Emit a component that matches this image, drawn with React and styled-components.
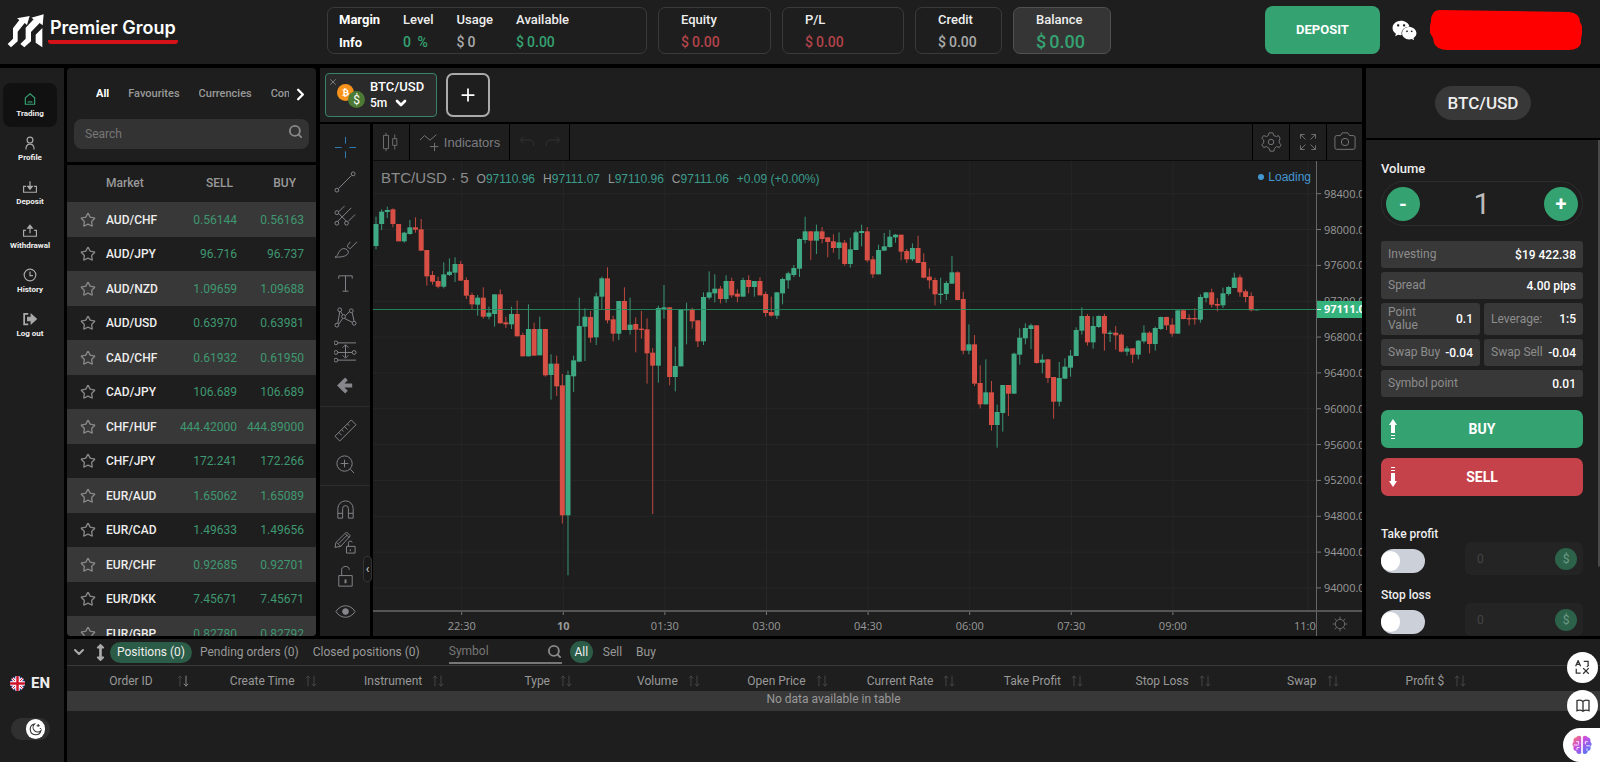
import React, { useState } from 'react'
import styled, { createGlobalStyle } from 'styled-components'
import { ChevronDown, ChevronRight, MoveDown, MoveUp, Search, Star, X } from 'lucide-react'
import { FaArrowsAltV, FaBtc, FaWeixin } from 'react-icons/fa'

const pairs = [
    ['AUD/CHF', '0.56144', '0.56163'],
    ['AUD/JPY', '96.716', '96.737'],
    ['AUD/NZD', '1.09659', '1.09688'],
    ['AUD/USD', '0.63970', '0.63981'],
    ['CAD/CHF', '0.61932', '0.61950'],
    ['CAD/JPY', '106.689', '106.689'],
    ['CHF/HUF', '444.42000', '444.89000'],
    ['CHF/JPY', '172.241', '172.266'],
    ['EUR/AUD', '1.65062', '1.65089'],
    ['EUR/CAD', '1.49633', '1.49656'],
    ['EUR/CHF', '0.92685', '0.92701'],
    ['EUR/DKK', '7.45671', '7.45671'],
    ['EUR/GBP', '0.82780', '0.82792'],
]

const columns = ['Order ID', 'Create Time', 'Instrument', 'Type', 'Volume', 'Open Price', 'Current Rate', 'Take Profit', 'Stop Loss', 'Swap', 'Profit $']

const prices = [98400, 98000, 97600, 97200, 96800, 96400, 96000, 95600, 95200, 94800, 94400, 94000]
const times = ['22:30', '10', '01:30', '03:00', '04:30', '06:00', '07:30', '09:00']

// direction, then high, body top, body bottom, low (three units to a pixel)
const candles = `g50,72,138,148 g28,35,72,90 g20,30,36,54 r25,28,72,82 r72,72,124,124 g95,98,124,128 g60,82,102,104
r52,82,89,98 r57,88,152,152 r150,150,229,257 r213,225,245,254 r230,243,260,265 g187,223,260,265 g175,215,225,228
g172,192,218,246 r183,192,242,242 r232,240,287,297 r278,285,313,328 g285,293,314,347 r262,293,350,356 g320,338,350,358
g283,283,342,380 r268,283,370,370 r350,367,373,384 g320,342,373,387 r302,342,409,409 r398,405,469,469 g313,387,469,469
r368,387,467,467 g350,387,466,466 r387,387,526,530 g463,491,525,599 r467,491,559,588 r522,556,946,971 g512,525,946,1126
g467,481,529,576 g293,378,485,485 g325,350,380,483 r333,351,413,428 g278,289,412,435 g230,235,290,328 r202,235,361,370
r347,358,401,424 g303,303,401,420 r262,303,390,390 g293,374,390,404 r352,372,389,457 r333,386,390,416 r355,388,460,551
r444,458,497,942 g317,324,497,548 g255,322,327,356 r322,322,531,556 g440,498,531,574 g327,327,499,499 g308,327,331,433
r323,328,364,386 r361,361,424,441 g277,291,424,435 g214,277,293,298 g223,266,280,307 r258,266,297,310 g226,243,297,308
r233,243,286,293 r268,281,290,307 g233,240,290,290 r226,240,261,280 g243,243,261,290 r232,243,286,286 r275,282,339,350
r290,336,347,350 g277,277,347,357 g233,237,280,313 g215,220,241,266 g195,204,225,231 g115,117,206,231 g50,94,120,130
r94,94,122,180 g74,94,122,162 r81,94,117,130 r112,112,126,172 r103,124,144,158 g97,127,144,178 r120,128,192,197
g113,148,192,203 g92,97,150,150 g74,93,99,139 r81,94,181,187 r168,178,223,234 g134,150,223,223 g99,139,152,152
g90,110,141,143 g102,104,112,128 r104,104,155,181 r147,153,178,189 g130,144,178,183 r107,144,189,189 r160,186,233,235
r205,230,241,266 r233,240,283,316 g233,281,285,311 g243,249,282,300 g168,217,251,251 r214,217,300,301 r275,297,452,463
g373,433,452,463 r405,433,551,558 r496,549,613,625 g478,577,613,613 r543,577,675,692 g614,636,675,743 g555,555,639,695
r555,555,581,648 g458,461,581,581 g385,413,464,494 g370,384,415,433 g371,376,387,447 r376,376,489,491 g463,479,488,520
r478,478,534,549 r531,531,605,656 g486,534,605,619 g475,500,536,536 g450,467,503,530 g382,390,468,468 g322,348,392,404
r342,348,427,437 g349,378,427,446 g346,348,381,384 r341,348,401,452 g391,398,402,426 r378,398,406,449 r400,404,455,457
g438,445,455,467 r445,445,464,489 g420,422,464,478 g376,398,424,430 r394,398,432,460 g380,384,432,452 g350,351,387,390
r350,351,376,390 r355,374,401,410 g330,331,401,401 r328,331,357,358 r343,354,358,376 r325,354,358,374 g283,291,359,368
g277,277,294,307 r266,277,314,322 r294,312,317,334 g263,280,316,324 g258,261,282,287 g218,233,264,264 r224,232,277,290
r268,274,291,307 r277,288,331,334 g327,328,331,331`
    .split(/\s+/)
    .map((c) => [c[0] === 'g', ...c.slice(1).split(',').map(Number)])

const priceY = (i) => 32.7 + i * 35.84
const timeX = (i) => 88.7 + i * 101.6

const Line = ({ size = 24, children, ...rest }) => (
    <svg width={size} height={size} viewBox="0 0 24 24" fill="none" stroke="currentColor" strokeWidth="1" aria-hidden="true" {...rest}>
        {children}
    </svg>
)

const navItems = [
    ['Trading', <><path d="M4 10l8-7 8 7v11H4z" /><path d="M8 17h8" /></>],
    ['Profile', <><circle cx="12" cy="7" r="5" /><path d="M5 23c0-6 3-9 7-9s7 3 7 9" /></>],
    ['Deposit', <><path d="M5 11H1v10h22V11h-4M12 2v12" /><path d="M8 11l4 5 4-5z" fill="currentColor" /></>],
    ['Withdrawal', <><path d="M5 11H1v10h22V11h-4M12 16V6" /><path d="M8 7l4-5 4 5z" fill="currentColor" /></>],
    ['History', <><circle cx="12" cy="12" r="10" /><path d="M12 6v7h5" /></>],
    ['Log out', <><path d="M9 3H2v18h7" strokeWidth="3" /><path d="M8 9h6V4l9 8-9 8v-5H8z" fill="currentColor" /></>],
]

const drawTools = [
    [
        ['Cross', <path d="M12 1v7M12 16v7M1 12h7M16 12h7" />],
        ['Trend line', <><circle cx="3" cy="21" r="2" /><circle cx="20" cy="4" r="2" /><path d="M5 19L18 6" /></>],
        ['Pitchfork', <><circle cx="3" cy="9" r="2" /><circle cx="3" cy="20" r="2" /><circle cx="13" cy="20" r="2" /><path d="M5 8l6-6M4 18L18 4M5 10l8 8M15 18l7-7" /></>],
        ['Brush', <><path d="M1 20c4-1 3-8 9-9 3 0 5 2 5 4-1 4-6 5-14 5z" /><path d="M14 8c0 2 2 3 3 3l7-7M14 8l3-4" /></>],
        ['Text', <path d="M5 7V4h14v3M12 4v16M9 20h6" />],
        ['Pattern', <><circle cx="3" cy="20" r="2" /><circle cx="6" cy="4" r="2" /><circle cx="10" cy="11" r="2" /><circle cx="18" cy="5" r="2" /><circle cx="21" cy="18" r="2" /><path d="M4 18L6 6M7 6l2 3M12 10l4-4M19 7l2 9M11 13l8 4M9 13l-4 6" /></>],
        ['Forecast', <><circle cx="2" cy="3" r="2" /><circle cx="2" cy="13" r="2" /><circle cx="21" cy="13" r="2" /><circle cx="2" cy="21" r="2" /><path d="M4 3h19M4 13h15M4 21h19M12 5v13M9 8l3-3 3 3M9 16l3 3 3-3" /></>],
        ['Arrow', <path d="M13 5l-7 7 7 7M6 12h13" strokeWidth="4" />],
    ],
    [
        ['Measure', <><path d="M1 18L18 1l5 5L6 23z" /><path d="M5 14l3 3M8 11l2 2M11 8l3 3M14 5l2 2" /></>],
        ['Zoom in', <><circle cx="11" cy="11" r="8" /><path d="M17 17l4 4M7 11h8M11 7v8" /></>],
    ],
    [
        ['Magnet', <path d="M4 21V11a8 8 0 0116 0v10h-5V11a3 3 0 00-6 0v10zM4 16h5M15 16h5" />],
        ['Lock drawing', <><path d="M1 16l1-5L13 0l4 4L7 15zM3 11l4 4M12 2l4 4M5 12l9-9" /><path d="M13 15h9v7h-9zM15 15v-3a2 2 0 014-1M17 18v2" /></>],
        ['Lock all', <><path d="M5 10h14v11H5zM8 10V5a4 4 0 018-1" /><path d="M12 14v4" strokeWidth="2" /></>],
        ['Hide', <><path d="M2 12c5-8 15-8 20 0-5 8-15 8-20 0z" /><circle cx="12" cy="12" r="3" fill="currentColor" /></>],
    ],
]

const Logo = () => (
    <svg width="37" height="35" viewBox="22 32 111 105" fill="#fff" aria-hidden="true">
        <path d="M24 125L40 109V78L59 53 52 48 90 41 82 68 75 62 54 88V117L34 135zM62 125L78 109V76L102 51 95 46 132 36 129 69 120 62 94 89V117L74 135zM128 77V135L108 121V97z" />
    </svg>
)

const Moon = () => (
    <svg width="13" height="13" viewBox="0 0 24 24" fill="none" stroke="#333" strokeWidth="2">
        <path d="M10 2a10 10 0 1012 12A8 8 0 0110 2z" />
        <path d="M17 2v5M14 5h6M21 9v2" />
    </svg>
)

const Flag = () => (
    <svg width="15" height="15" viewBox="0 0 30 30" aria-hidden="true">
        <defs><clipPath id="flag"><circle cx="15" cy="15" r="15" /></clipPath></defs>
        <g clipPath="url(#flag)">
            <path d="M0 0h30v30H0z" fill="#27348b" />
            <path d="M0 0l30 30M30 0L0 30" stroke="#fff" strokeWidth="6" />
            <path d="M0 0l30 30M30 0L0 30" stroke="#d0142c" strokeWidth="2" />
            <path d="M15 0v30M0 15h30" stroke="#fff" strokeWidth="9" />
            <path d="M15 0v30M0 15h30" stroke="#d0142c" strokeWidth="5" />
        </g>
    </svg>
)

const Chart = () => (
    <ChartGrid>
        <svg width="100%" height="100%">
            {prices.map((p, i) => <line key={p} x1="0" x2="100%" y1={priceY(i)} y2={priceY(i)} stroke="#272727" />)}
            {times.map((t, i) => <line key={t} y1="0" y2="100%" x1={timeX(i)} x2={timeX(i)} stroke="#26262b" />)}
            <line y1="0" y2="100%" x1="935" x2="935" stroke="#26262b" />
            <g transform="translate(0 39) scale(0.33333)">
                {candles.map(([up, high, top, bottom, low], i) => {
                    const x = 9 + i * 16.94
                    return (
                        <g key={i} fill={up ? '#3fa984' : '#d85045'}>
                            <rect x={x - 1.5} y={high} width="3" height={low - high} opacity="0.85" />
                            <rect x={x - 7.5} y={top} width="15" height={Math.max(bottom - top, 3)} />
                        </g>
                    )
                })}
            </g>
            <line x1="0" x2="100%" y1="148.5" y2="148.5" stroke="#259060" strokeOpacity="0.85" />
        </svg>
        <PriceAxis width="100%" height="100%">
            {prices.map((p, i) => (
                <g key={p}>
                    <line x1="0" x2="4" y1={priceY(i)} y2={priceY(i)} stroke="#777" />
                    <text x="7" y={priceY(i) + 4}>{p}.00</text>
                </g>
            ))}
            <rect y="140" width="100%" height="17" fill="#36b27d" />
            <line x1="0" x2="4" y1="148.5" y2="148.5" stroke="#fff" />
            <LastPrice x="7" y="152">97111.06</LastPrice>
        </PriceAxis>
        <TimeAxis width="100%" height="100%">
            {times.map((t, i) => (
                <g key={t}>
                    <line y1="0" y2="3" x1={timeX(i)} x2={timeX(i)} stroke="#777" />
                    <text x={timeX(i)} y="18" fontWeight={t === '10' ? 700 : 400}>{t}</text>
                </g>
            ))}
            <text x="935" y="18">11:00</text>
        </TimeAxis>
        <AxisCorner aria-label="Axis settings">
            <Line size={16}><circle cx="12" cy="12" r="7" /><path d="M12 1v4M12 19v4M1 12h4M19 12h4M4 4l3 3M17 17l3 3M4 20l3-3M17 7l3-3" /></Line>
        </AxisCorner>
        <Legend>
            <LegendSymbol>BTC/USD <i>·</i> 5</LegendSymbol>
            <span>O<b>97110.96</b></span>
            <span>H<b>97111.07</b></span>
            <span>L<b>97110.96</b></span>
            <span>C<b>97111.06</b></span>
            <b>+0.09 (+0.00%)</b>
        </Legend>
        <Loading>Loading</Loading>
    </ChartGrid>
)

const Limit = ({ id, label }) => (
    <LimitRow>
        <LimitLabel htmlFor={id}>{label}</LimitLabel>
        <Switch id={id} type="checkbox" />
        <LimitBox>
            <LimitInput aria-label={`${label} value`} defaultValue="0" disabled />
            <Currency>$</Currency>
        </LimitBox>
    </LimitRow>
)

const TradeArrow = ({ down }) => (
    <svg width="8" height="20" viewBox="0 0 8 20" fill="#fff" aria-hidden="true">
        <path d={down ? 'M2 0h4v1H2zM2 3h4v1H2zM2 6h4v8h2l-4 6-4-6h2z' : 'M2 20h4v-1H2zM2 17h4v-1H2zM2 14h4V6h2L4 0 0 6h2z'} />
    </svg>
)

const App = () => {
    const [volume, setVolume] = useState(1)

    return (
        <Page>
            <GlobalStyle />
            <Header>
                <Brand>
                    <Logo />
                    <BrandName>Premier Group</BrandName>
                </Brand>
                <Stats>
                    <MarginBox>
                        <MarginTitle>Margin<br />Info</MarginTitle>
                        <Stat $color="#35a272"><span>Level</span><Value><i>0</i> %</Value></Stat>
                        <Stat $color="#aaa"><span>Usage</span><Value>$<i>0</i></Value></Stat>
                        <Stat $color="#35a272"><span>Available</span><Value>$<i>0.00</i></Value></Stat>
                    </MarginBox>
                    <StatBox $width="113px"><Stat $color="#b3434a"><span>Equity</span><Value>$<i>0.00</i></Value></Stat></StatBox>
                    <StatBox $width="122px"><Stat $color="#b3434a"><span>P/L</span><Value>$<i>0.00</i></Value></Stat></StatBox>
                    <StatBox $width="87px"><Stat $color="#aaa"><span>Credit</span><Value>$<i>0.00</i></Value></Stat></StatBox>
                    <StatBox $width="98px" $filled><Stat $color="#35a272"><span>Balance</span><Value $large>$<i>0.00</i></Value></Stat></StatBox>
                </Stats>
                <DepositButton>DEPOSIT</DepositButton>
                <IconButton aria-label="WeChat"><FaWeixin size={25} color="#fff" /></IconButton>
                <svg width="154" height="42" viewBox="0 0 154 42" aria-hidden="true">
                    <path d="M10 1L140 3Q151 4 151 13L153 17V25L152 30V34Q150 41 140 41H18Q8 41 5 34L4 29L1 24V17L2 12Q2 2 10 1z" fill="#f00" />
                </svg>
            </Header>

            <Sidebar>
                <Nav>
                    {navItems.map(([name, icon], i) => (
                        <NavItem key={name} href="#" $active={i === 0}>
                            <Line size={14} strokeWidth="2">{icon}</Line>
                            {name}
                        </NavItem>
                    ))}
                </Nav>
                <Language><Flag /> EN</Language>
                <ThemeToggle aria-label="Dark mode"><span><Moon /></span></ThemeToggle>
            </Sidebar>

            <Workspace>
                <Market>
                    <MarketTop>
                        <MarketTabs>
                            <MarketTab $active>All</MarketTab>
                            <MarketTab>Favourites</MarketTab>
                            <MarketTab>Currencies</MarketTab>
                            <MarketTab $cut>Commodities</MarketTab>
                            <IconButton aria-label="Next"><ChevronRight size={19} strokeWidth={3} color="#fff" /></IconButton>
                        </MarketTabs>
                        <SearchBox>
                            <SearchInput aria-label="Search" placeholder="Search" />
                            <Search size={15} color="#888" strokeWidth={3} />
                        </SearchBox>
                    </MarketTop>
                    <MarketList>
                        <PairTable>
                            <colgroup>
                                <StarCol /><col /><SellCol /><BuyCol />
                            </colgroup>
                            <thead>
                                <tr><th colSpan="2">Market</th><th>SELL</th><th>BUY</th></tr>
                            </thead>
                            <tbody>
                                {pairs.map(([name, sell, buy]) => (
                                    <tr key={name}>
                                        <td><IconButton aria-label={`Favourite ${name}`}><Star size={16} color="#888" /></IconButton></td>
                                        <td>{name}</td>
                                        <td>{sell}</td>
                                        <td>{buy}</td>
                                    </tr>
                                ))}
                            </tbody>
                        </PairTable>
                    </MarketList>
                </Market>

                <Center>
                    <ChartTabs>
                        <ChartTab>
                            <CloseTab aria-label="Close"><X size={10} /></CloseTab>
                            <Coins>
                                <Coin $color="#f7931a"><FaBtc size={9} /></Coin>
                                <Coin $color="#4c7a34">$</Coin>
                            </Coins>
                            <TabText>
                                BTC/USD
                                <Interval>5m <ChevronDown size={16} strokeWidth={4} /></Interval>
                            </TabText>
                        </ChartTab>
                        <AddTab aria-label="Add chart"><Line size={14} strokeWidth="3"><path d="M12 1v22M1 12h22" /></Line></AddTab>
                    </ChartTabs>
                    <ChartArea>
                        <Tools>
                            {drawTools.map((group, i) => (
                                <ToolGroup key={i}>
                                    {group.map(([name, icon]) => (
                                        <ToolButton key={name} aria-label={name} $active={name === 'Cross'}><Line size={23}>{icon}</Line></ToolButton>
                                    ))}
                                </ToolGroup>
                            ))}
                            <Collapse aria-label="Hide toolbar">‹</Collapse>
                        </Tools>
                        <ChartColumn>
                            <Toolbar>
                                <ToolbarCell $width="37px">
                                    <IconButton aria-label="Chart type"><Line size={20}><path d="M3 4h6v16H3zM6 1v3M6 20v3M14 8h5v8h-5zM16.500 3v5M16.500 16v5" /></Line></IconButton>
                                </ToolbarCell>
                                <ToolbarCell $width="100px">
                                    <Indicators>
                                        <Line size={22}><path d="M1 10l5-5 6 5 7-6M12 17h9M17 13v9" /></Line>
                                        Indicators
                                    </Indicators>
                                </ToolbarCell>
                                <ToolbarCell $width="60px" $faded>
                                    <IconButton aria-label="Undo"><Line size={16}><path d="M7 4L2 9l5 5M2 9h13c5 0 7 3 7 9" /></Line></IconButton>
                                    <IconButton aria-label="Redo"><Line size={16}><path d="M17 4l5 5-5 5M22 9H9c-5 0-7 3-7 9" /></Line></IconButton>
                                </ToolbarCell>
                                <ToolbarEnd>
                                    <IconButton aria-label="Settings">
                                        <Line size={22}><circle cx="12" cy="12" r="3" /><path d="M10 2h4l1 3 3 1 2-1 2 3-1 2v3l2 2-2 3-3-1-2 2-1 3h-4l-1-3-3-2-3 1-2-3 2-2V10L2 8l2-3 3 1 2-1z" /></Line>
                                    </IconButton>
                                    <IconButton aria-label="Fullscreen">
                                        <Line size={20}><path d="M3 8V3h5M3 3l6 6M16 3h5v5M21 3l-6 6M3 16v5h5M3 21l6-6M21 16v5h-5M21 21l-6-6" /></Line>
                                    </IconButton>
                                    <IconButton aria-label="Snapshot">
                                        <Line size={22}><path d="M1 7q0-2 2-2h4l2-3h6l2 3h4q2 0 2 2v11q0 2-2 2H3q-2 0-2-2z" /><circle cx="12" cy="12" r="4" /></Line>
                                    </IconButton>
                                </ToolbarEnd>
                            </Toolbar>
                            <Chart />
                        </ChartColumn>
                    </ChartArea>
                </Center>

                <Order>
                    <OrderTop><SymbolPill>BTC/USD</SymbolPill></OrderTop>
                    <OrderBody>
                        <VolumeLabel htmlFor="volume">Volume</VolumeLabel>
                        <Stepper>
                            <RoundButton aria-label="Decrease" onClick={() => setVolume(Math.max(1, volume - 1))}>-</RoundButton>
                            <VolumeInput id="volume" value={volume} onChange={(e) => setVolume(Number(e.target.value) || 1)} />
                            <RoundButton aria-label="Increase" onClick={() => setVolume(volume + 1)}>+</RoundButton>
                        </Stepper>
                        <Facts>
                            <Fact $wide><dt>Investing</dt><dd>$19 422.38</dd></Fact>
                            <Fact $wide><dt>Spread</dt><dd>4.00 pips</dd></Fact>
                            <Fact><dt>Point<br />Value</dt><dd>0.1</dd></Fact>
                            <Fact><dt>Leverage:</dt><dd>1:5</dd></Fact>
                            <Fact><dt>Swap Buy</dt><dd>-0.04</dd></Fact>
                            <Fact><dt>Swap Sell</dt><dd>-0.04</dd></Fact>
                            <Fact $wide><dt>Symbol point</dt><dd>0.01</dd></Fact>
                        </Facts>
                        <TradeButton $color="#35a272"><TradeArrow /><span>BUY</span></TradeButton>
                        <TradeButton $color="#c5424a"><TradeArrow down /><span>SELL</span></TradeButton>
                        <Limits>
                            <Limit id="take-profit" label="Take profit" />
                            <Limit id="stop-loss" label="Stop loss" />
                        </Limits>
                    </OrderBody>
                </Order>

                <Positions>
                    <PositionsBar>
                        <PanelControls>
                            <IconButton aria-label="Collapse"><ChevronDown size={16} strokeWidth={3} /></IconButton>
                            <IconButton aria-label="Resize"><FaArrowsAltV size={17} /></IconButton>
                        </PanelControls>
                        <PositionsTab $active>Positions (0)</PositionsTab>
                        <PositionsTab>Pending orders (0)</PositionsTab>
                        <PositionsTab>Closed positions (0)</PositionsTab>
                        <SymbolBox>
                            <SymbolInput aria-label="Symbol" placeholder="Symbol" />
                            <Search size={15} color="#888" strokeWidth={3} />
                        </SymbolBox>
                        <SideButton $active>All</SideButton>
                        <SideButton>Sell</SideButton>
                        <SideButton>Buy</SideButton>
                    </PositionsBar>
                    <PositionsTable>
                        <thead>
                            <tr>
                                {columns.map((name, i) => (
                                    <Column key={name} $first={i === 0}>
                                        <div>{name}<Sort><MoveUp size={12} /><MoveDown size={12} /></Sort></div>
                                    </Column>
                                ))}
                                <th />
                            </tr>
                        </thead>
                        <tbody>
                            <tr><td colSpan="12">No data available in table</td></tr>
                        </tbody>
                    </PositionsTable>
                </Positions>
            </Workspace>

            <Floating>
                <FloatButton aria-label="Translate">
                    <Line size={15} strokeWidth="2"><path d="M1 10L5 1l4 9M2 7h6M14 2h7v6M2 14v7h7M22 8l-3 3M13 13l9 9M22 13l-9 9" /></Line>
                </FloatButton>
                <FloatButton aria-label="Reader">
                    <Line size={16} strokeWidth="2"><path d="M12 5Q7 2 3 4v15q5-2 9 1 4-3 9-1V4q-4-2-9 1zM12 5v15" /></Line>
                </FloatButton>
                <BrainButton aria-label="Assistant">
                    <svg width="20" height="20" viewBox="0 0 24 24">
                        <defs>
                            <linearGradient id="brain" x1="0" y1="0" x2="1" y2="1">
                                <stop offset="0" stopColor="#ff7a59" /><stop offset="0.4" stopColor="#c94fe0" /><stop offset="1" stopColor="#2f80ff" />
                            </linearGradient>
                        </defs>
                        <path d="M11 2v20c-3 2-6 0-6-3-3 0-4-3-3-5-2-2-2-4 0-6-1-3 1-5 3-5 1-2 4-3 6-1zM13 2v20c3 2 6 0 6-3 3 0 4-3 3-5 2-2 2-4 0-6 1-3-1-5-3-5-1-2-4-3-6-1z" fill="url(#brain)" />
                        <path d="M5 8h3v3M2 12h6M6 18v-3h3M19 8h-3v3M22 13h-5M18 19v-3" stroke="#fff" fill="none" />
                    </svg>
                </BrainButton>
            </Floating>
        </Page>
    )
}

const GlobalStyle = createGlobalStyle`
* { box-sizing: border-box; }
body { margin: 0; background: #000; color: #eee; font: 12px/16px Roboto, sans-serif; }
button, input { font: inherit; color: inherit; border: 0; padding: 0; background: none; }
button { cursor: pointer; }
i { font-style: normal; }
svg { flex-shrink: 0; }
`;

const Page = styled.div`
display: grid;
grid-template: 64px minmax(0, 1fr) / 64px minmax(0, 1fr);
gap: 4px 3px;
height: 100vh;
`;

const Panel = styled.div`
background: #1e1e1e;
`;

const IconButton = styled.button`
display: flex;
align-items: center;
justify-content: center;
`;

const Header = styled.header`
grid-column: 1 / -1;
display: flex;
align-items: center;
padding: 0 17px 4px 7px;
gap: 12px;
background: #1e1e1e;
`;

const Brand = styled.div`
display: flex;
align-items: center;
width: 308px;
gap: 4px;
`;

const BrandName = styled.div`
padding: 0 2px;
border-bottom: 4px solid #d51217;
border-radius: 3px;
font: 600 18px/24px Inter, sans-serif;
color: #fff;
`;

const Stats = styled.div`
display: flex;
gap: 11px;
flex: 1;
`;

const StatBox = styled.div`
display: flex;
width: ${(p) => p.$width};
height: 47px;
padding: 0 22px;
border: 1px solid ${(p) => (p.$filled ? '#505050' : '#3a3a3a')};
border-radius: 7px;
background: ${(p) => (p.$filled ? '#353535' : 'none')};
`;

const MarginBox = styled(StatBox)`
width: 320px;
padding: 0 11px;
gap: 23px;
`;

const MarginTitle = styled.div`
width: 41px;
font-size: 13px;
font-weight: 700;
line-height: 23px;
color: #fff;
`;

const Stat = styled.div`
display: flex;
flex-direction: column;
color: ${(p) => p.$color};
span { font-size: 13px; font-weight: 500; line-height: 23px; color: #eee; }
`;

const Value = styled.div`
display: flex;
gap: 3px;
font-size: ${(p) => (p.$large ? 18 : 14)}px;
font-weight: 500;
line-height: 22px;
white-space: pre;
`;

const DepositButton = styled.button`
width: 115px;
height: 48px;
border-radius: 8px;
background: #35a272;
color: #fff;
font-size: 13px;
font-weight: 700;
`;

const Sidebar = styled.aside`
display: flex;
flex-direction: column;
align-items: center;
background: #1e1e1e;
padding: 15px 7px 22px 3px;
`;

const Nav = styled.nav`
display: flex;
flex-direction: column;
flex: 1;
width: 100%;
`;

const NavItem = styled.a`
display: flex;
flex-direction: column;
align-items: center;
justify-content: center;
height: 44px;
padding-top: 3px;
border-radius: 8px;
background: ${(p) => (p.$active ? '#111' : 'none')};
color: #eee;
font-size: 8px;
font-weight: 700;
text-decoration: none;
svg { color: ${(p) => (p.$active ? '#35a272' : '#aaa')}; }
`;

const Language = styled.button`
display: flex;
align-items: center;
gap: 6px;
height: 24px;
margin-bottom: 23px;
font-size: 15px;
font-weight: 700;
`;

const ThemeToggle = styled.button`
display: flex;
justify-content: flex-end;
width: 39px;
padding: 1px 5px;
border-radius: 11px;
background: #303030;
span {
display: flex;
align-items: center;
justify-content: center;
width: 19px;
height: 20px;
border-radius: 10px;
background: #fff;
}
`;

const Workspace = styled.main`
display: grid;
grid-template: minmax(0, 1fr) 123px / 249px minmax(0, 1fr) 234px;
gap: 3px 4px;
`;

const Market = styled.section`
display: grid;
grid-template: 94px minmax(0, 1fr) / minmax(0, 1fr);
gap: 3px;
`;

const MarketTop = styled(Panel)`
padding: 17px 7px 0;
border-radius: 4px 4px 0 0;
`;

const MarketTabs = styled.div`
display: flex;
align-items: center;
gap: 19px;
height: 18px;
padding-left: 22px;
margin-bottom: 16px;
`;

const MarketTab = styled.button`
flex: none;
width: ${(p) => (p.$cut ? '18px' : 'auto')};
overflow: hidden;
color: ${(p) => (p.$active ? '#fff' : '#999')};
font-size: 11px;
font-weight: ${(p) => (p.$active ? 700 : 500)};
& + ${IconButton} { margin-left: -17px; }
`;

const SearchBox = styled.div`
display: flex;
align-items: center;
height: 30px;
padding: 0 6px 0 11px;
border-radius: 8px;
background: #333;
svg { margin-bottom: 6px; }
`;

const SearchInput = styled.input`
flex: 1;
min-width: 0;
&::placeholder { color: #777; opacity: 1; }
`;

const MarketList = styled(Panel)`
overflow: hidden;
border-radius: 0 0 4px 4px;
`;

const StarCol = styled.col`
width: 39px;
`;

const SellCol = styled.col`
width: 62px;
`;

const BuyCol = styled.col`
width: 79px;
`;

const PairTable = styled.table`
width: 100%;
table-layout: fixed;
border-collapse: collapse;
th { height: 37px; padding: 0 4px 2px 0; color: #999; font-weight: 500; text-align: right; }
th:first-child { padding-left: 39px; text-align: left; }
th:last-child { padding-right: 20px; }
td { height: 34px; padding: 0; color: #3f9871; text-align: right; }
tr:nth-child(odd) td { height: 35px; background: #383838; }
td:first-child { padding-left: 13px; }
td:nth-child(2) { color: #eee; font-weight: 500; text-align: left; }
td:last-child { padding-right: 12px; }
`;

const Center = styled.section`
display: grid;
grid-template-rows: 54px minmax(0, 1fr);
gap: 2px;
min-width: 0;
`;

const ChartTabs = styled(Panel)`
display: flex;
align-items: center;
gap: 9px;
padding: 0 5px;
`;

const ChartTab = styled.div`
position: relative;
display: flex;
align-items: center;
gap: 5px;
width: 112px;
height: 44px;
padding-left: 11px;
border: 1px solid #35846a;
border-radius: 4px;
background: #2a2a2a;
`;

const CloseTab = styled.button`
position: absolute;
top: 3px;
left: 2px;
display: flex;
color: #888;
`;

const Coins = styled.div`
display: flex;
align-items: flex-start;
padding-top: 2px;
`;

const Coin = styled.span`
display: flex;
align-items: center;
justify-content: center;
width: 17px;
height: 17px;
border-radius: 9px;
background: ${(p) => p.$color};
color: #fff;
& + & { margin: 7px 0 0 -6px; }
`;

const TabText = styled.div`
display: flex;
flex-direction: column;
align-items: flex-start;
font-size: 13px;
font-weight: 500;
color: #fff;
`;

const Interval = styled.button`
display: flex;
align-items: center;
gap: 6px;
font-size: 12px;
font-weight: 500;
`;

const AddTab = styled.button`
display: flex;
align-items: center;
justify-content: center;
width: 44px;
height: 44px;
border: 2px solid #aaa;
border-radius: 7px;
color: #fff;
`;

const ChartArea = styled.div`
display: grid;
grid-template-columns: 50px minmax(0, 1fr);
gap: 3px;
`;

const Tools = styled(Panel)`
position: relative;
`;

const ToolGroup = styled.div`
padding: 6px 0 4px;
& + & { border-top: 1px solid #2c2c2f; }
`;

const ToolButton = styled.button`
display: flex;
align-items: center;
justify-content: center;
width: 100%;
height: 34px;
color: ${(p) => (p.$active ? '#2f7fb8' : '#86868c')};
`;

const Collapse = styled.button`
position: absolute;
right: -2px;
bottom: 54px;
width: 9px;
height: 26px;
border: 1px solid #333;
border-radius: 4px;
background: #1a1a1a;
color: #ddd;
`;

const ChartColumn = styled.div`
display: grid;
grid-template-rows: 37px minmax(0, 1fr);
`;

const Toolbar = styled(Panel)`
display: flex;
border-bottom: 1px solid #0c0c0c;
color: #7c7c80;
`;

const ToolbarCell = styled.div`
display: flex;
align-items: center;
justify-content: center;
gap: 10px;
width: ${(p) => p.$width};
border-right: 1px solid #000;
color: ${(p) => (p.$faded ? '#3c3c3e' : 'inherit')};
`;

const Indicators = styled.button`
display: flex;
align-items: center;
gap: 3px;
font: 13px "Liberation Sans", sans-serif;
`;

const ToolbarEnd = styled.div`
display: flex;
margin-left: auto;
button { width: 37px; border-left: 1px solid #000; }
button:last-child { width: 36px; }
`;

const ChartGrid = styled(Panel)`
position: relative;
display: grid;
grid-template: minmax(0, 1fr) 26px / minmax(0, 1fr) 46px;
overflow: hidden;
`;

const PriceAxis = styled.svg`
border-left: 1px solid #666;
font: 11px "Open Sans", sans-serif;
fill: #999;
`;

const LastPrice = styled.text`
fill: #fff;
font-weight: 700;
`;

const TimeAxis = styled.svg`
border-top: 2px solid #555;
font: 11px "Open Sans", sans-serif;
fill: #999;
text-anchor: middle;
`;

const AxisCorner = styled.button`
display: flex;
align-items: center;
justify-content: center;
border-top: 2px solid #555;
border-left: 1px solid #666;
color: #888;
`;

const Legend = styled.div`
position: absolute;
top: 7px;
left: 8px;
display: flex;
align-items: flex-end;
gap: 8px;
font: 12px/16px "Liberation Sans", sans-serif;
color: #999;
b { color: #3b9c8c; font-weight: 400; }
`;

const LegendSymbol = styled.span`
font-size: 15px;
line-height: 19px;
color: #8c8c8c;
`;

const Loading = styled.div`
position: absolute;
top: 8px;
right: 51px;
display: flex;
align-items: center;
gap: 4px;
font: 12px/16px "Liberation Sans", sans-serif;
color: #4397d3;
&::before { content: ''; width: 6px; height: 6px; border-radius: 3px; background: currentColor; }
`;

const Order = styled.section`
display: grid;
grid-template-rows: 70px minmax(0, 1fr);
gap: 2px;
`;

const OrderTop = styled(Panel)`
display: flex;
align-items: center;
justify-content: center;
`;

const SymbolPill = styled.div`
padding: 0 13px;
border-radius: 17px;
background: #383838;
font-size: 17px;
font-weight: 500;
line-height: 34px;
`;

const OrderBody = styled(Panel)`
padding: 21px 17px 0 15px;
background: linear-gradient(#4a4a4a, #4a4a4a) right top / 2px 86% no-repeat #1e1e1e;
overflow: hidden;
`;

const VolumeLabel = styled.label`
font-size: 13px;
font-weight: 500;
`;

const Stepper = styled.div`
display: flex;
align-items: center;
justify-content: space-between;
height: 45px;
padding: 0 4px;
margin: 4px 0 15px;
border: 1px solid #2d2d2d;
border-radius: 23px;
`;

const RoundButton = styled.button`
width: 34px;
height: 34px;
border-radius: 17px;
background: #35a272;
color: #fff;
font-size: 20px;
font-weight: 700;
`;

const VolumeInput = styled.input`
flex: 1;
min-width: 0;
color: #bbb;
font-size: 30px;
text-align: center;
`;

const Facts = styled.dl`
display: grid;
grid-template-columns: 1fr 1fr;
gap: 4px;
margin: 0 0 13px;
`;

const Fact = styled.div`
display: flex;
align-items: center;
justify-content: space-between;
grid-column: ${(p) => (p.$wide ? '1 / -1' : 'auto')};
min-height: 27px;
padding: 3px 7px;
border-radius: 3px;
background: #383838;
dt { color: #8d8d8d; line-height: 13px; }
dd { margin: 0; font-weight: 500; color: #fff; }
`;

const TradeButton = styled.button`
display: flex;
align-items: center;
width: 100%;
height: 38px;
margin-bottom: 10px;
padding: 0 8px;
border-radius: 7px;
background: ${(p) => p.$color};
color: #fff;
font-size: 14px;
font-weight: 700;
span { flex: 1; padding-right: 8px; }
`;

const Limits = styled.div`
display: grid;
gap: 12px;
padding-top: 20px;
`;

const LimitRow = styled.div`
display: grid;
grid-template: 16px 33px / 1fr 118px;
`;

const LimitLabel = styled.label`
font-weight: 500;
`;

const Switch = styled.input`
appearance: none;
grid-row: 2;
width: 44px;
height: 24px;
margin: 7px 0 0;
border-radius: 12px;
background: #ccd0d9;
&::before {
content: '';
display: block;
width: 19px;
height: 20px;
margin: 2px 0;
border-radius: 10px;
background: #fff;
}
&:checked::before { margin-left: 25px; }
`;

const LimitBox = styled.div`
display: flex;
align-items: center;
grid-row: 2;
padding: 0 6px 0 12px;
border-radius: 6px;
background: #242424;
`;

const LimitInput = styled.input`
flex: 1;
min-width: 0;
color: #444;
`;

const Currency = styled.span`
width: 22px;
border-radius: 11px;
background: #2b6249;
color: #6f9a87;
line-height: 22px;
text-align: center;
`;

const Positions = styled(Panel)`
grid-column: 1 / -1;
`;

const PositionsBar = styled.div`
display: flex;
align-items: center;
gap: 8px;
height: 27px;
padding-left: 4px;
border-bottom: 1px solid #393939;
color: #aaa;
`;

const PanelControls = styled.div`
display: flex;
gap: 5px;
width: 31px;
`;

const PositionsTab = styled.button`
height: 21px;
padding: ${(p) => (p.$active ? '0 7px' : 0)};
margin-right: ${(p) => (p.$active ? 0 : '6px')};
border-radius: 11px;
background: ${(p) => (p.$active ? '#2b5c47' : 'none')};
color: ${(p) => (p.$active ? '#eee' : '#999')};
`;

const SymbolBox = styled.div`
display: flex;
align-items: center;
width: 113px;
height: 23px;
margin-left: 15px;
border-bottom: 2px solid #777;
`;

const SymbolInput = styled.input`
flex: 1;
min-width: 0;
&::placeholder { color: #777; opacity: 1; }
`;

const SideButton = styled.button`
width: ${(p) => (p.$active ? '23px' : 'auto')};
height: 22px;
margin-right: ${(p) => (p.$active ? '2px' : '6px')};
border-radius: 11px;
background: ${(p) => (p.$active ? '#2b5c47' : 'none')};
color: ${(p) => (p.$active ? '#eee' : '#999')};
`;

const PositionsTable = styled.table`
width: 100%;
table-layout: fixed;
border-collapse: collapse;
th { height: 25px; padding: 4px 0 0; font-weight: 400; color: #999; }
td { height: 20px; padding: 0 0 4px; background: #383838; color: #999; text-align: center; }
`;

const Column = styled.th`
div {
display: flex;
align-items: center;
justify-content: flex-end;
gap: ${(p) => (p.$first ? 21 : 7)}px;
padding-right: 3px;
}
svg:first-child { color: #444; margin-right: -6px; }
svg:last-child { color: ${(p) => (p.$first ? '#888' : '#444')}; }
`;

const Sort = styled.span`
display: flex;
`;

const Floating = styled.div`
position: fixed;
right: 0;
bottom: 0;
display: flex;
flex-direction: column;
align-items: flex-end;
gap: 7px;
`;

const FloatButton = styled.button`
display: flex;
align-items: center;
justify-content: center;
width: 31px;
height: 31px;
margin-right: 2px;
border-radius: 16px;
background: #fff;
color: #333;
`;

const BrainButton = styled(FloatButton)`
width: 37px;
height: 34px;
margin: 0;
border-radius: 18px 0 0 18px;
`;

export default App
